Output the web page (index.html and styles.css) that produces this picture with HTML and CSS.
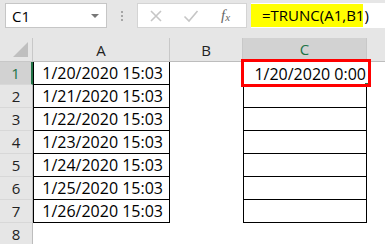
FILE: index.html
```html
<!DOCTYPE html>
<html lang="en">
<head>
    <meta charset="UTF-8">
    <title>TRUNC</title>
    <link rel="stylesheet" href="styles.css">
</head>
<body>
    <div class="toolbar">
        <div class="name-box">
            <span>C1</span>
            <span class="drop"></span>
        </div>
        <div class="grip"><i></i><i></i><i></i></div>
        <div class="fx-box">
            <svg class="icon" width="14" height="14" viewBox="0 0 14 14"><path d="M2 2 L12 12 M12 2 L2 12" stroke="#c6c6c6" stroke-width="1.6" fill="none"/></svg>
            <svg class="icon" width="16" height="14" viewBox="0 0 16 14"><path d="M1.5 7.5 L6 12 L14.5 2" stroke="#c6c6c6" stroke-width="1.6" fill="none"/></svg>
            <span class="fx">f<sub>x</sub></span>
        </div>
        <div class="formula">
            <span class="formula-text">=TRUNC(A1,B1)</span>
        </div>
    </div>

    <div class="sheet">
        <div class="corner"><span class="tri"></span></div>
        <div class="col-head">A</div>
        <div class="col-head">B</div>
        <div class="col-head active">C</div>
        <div class="col-head last"></div>

        <div class="row-head active">1</div>
        <div class="cell boxed">1/20/2020 15:03</div>
        <div class="cell"></div>
        <div class="cell selected">1/20/2020 0:00<span class="handle"></span></div>
        <div class="cell"></div>

        <div class="row-head">2</div>
        <div class="cell boxed">1/21/2020 15:03</div>
        <div class="cell"></div>
        <div class="cell boxed"></div>
        <div class="cell"></div>

        <div class="row-head">3</div>
        <div class="cell boxed">1/22/2020 15:03</div>
        <div class="cell"></div>
        <div class="cell boxed"></div>
        <div class="cell"></div>

        <div class="row-head">4</div>
        <div class="cell boxed">1/23/2020 15:03</div>
        <div class="cell"></div>
        <div class="cell boxed"></div>
        <div class="cell"></div>

        <div class="row-head">5</div>
        <div class="cell boxed">1/24/2020 15:03</div>
        <div class="cell"></div>
        <div class="cell boxed"></div>
        <div class="cell"></div>

        <div class="row-head">6</div>
        <div class="cell boxed">1/25/2020 15:03</div>
        <div class="cell"></div>
        <div class="cell boxed"></div>
        <div class="cell"></div>

        <div class="row-head">7</div>
        <div class="cell boxed">1/26/2020 15:03</div>
        <div class="cell"></div>
        <div class="cell boxed"></div>
        <div class="cell"></div>

        <div class="row-head">8</div>
        <div class="cell"></div>
        <div class="cell"></div>
        <div class="cell"></div>
        <div class="cell"></div>

        <div class="highlight"></div>
    </div>
</body>
</html>
```

FILE: styles.css
```css
body {
    margin: 0;
    background-color: #fff;
    font-family: "Open Sans", "Liberation Sans", sans-serif;
    color: #000;
    width: 385px;
    height: 244px;
    overflow: hidden;
}

/* --- barra de fórmulas --- */
.toolbar {
    height: 38px;
    background-color: #e6e6e6;
    display: flex;
    align-items: flex-start;
    padding-top: 3px;
    box-sizing: border-box;
}

.name-box {
    margin-left: 5px;
    width: 102px;
    height: 25px;
    box-sizing: border-box;
    background-color: #fff;
    border: 1px solid #c6c6c6;
    display: flex;
    align-items: center;
    justify-content: space-between;
    padding: 0 7px 0 6px;
    font-size: 15px;
}

.drop {
    width: 0;
    height: 0;
    border-left: 4px solid transparent;
    border-right: 4px solid transparent;
    border-top: 4px solid #777;
}

.grip {
    width: 30px;
    height: 25px;
    display: flex;
    flex-direction: column;
    align-items: center;
    justify-content: center;
    gap: 2px;
}

.grip i {
    width: 2px;
    height: 2px;
    background-color: #a6a6a6;
}

.fx-box {
    width: 110px;
    height: 25px;
    box-sizing: border-box;
    background-color: #fff;
    border: 1px solid #d4d4d4;
    display: flex;
    align-items: center;
    padding-left: 11px;
    gap: 20px;
}

.fx {
    font-family: "Liberation Serif", serif;
    font-style: italic;
    font-size: 15px;
    color: #666;
    margin-left: 2px;
}

.fx sub {
    font-size: 11px;
    vertical-align: -1px;
}

.formula {
    margin-left: 4px;
    flex: 1;
    height: 25px;
    background-color: #fff;
    padding-top: 1px;
    box-sizing: border-box;
}

.formula-text {
    display: inline-block;
    background-color: #ffff00;
    width: 112px;
    height: 23px;
    line-height: 23px;
    box-sizing: border-box;
    padding-left: 11px;
    font-size: 15px;
}

/* --- planilha --- */
.sheet {
    position: relative;
    display: grid;
    grid-template-columns: 33px 137px 73px 124px 1fr;
    grid-template-rows: 24px repeat(8, 23px);
}

.corner {
    background-color: #e6e6e6;
    border-right: 1px solid #c8c8c8;
    border-bottom: 1px solid #c8c8c8;
    position: relative;
}

.tri {
    position: absolute;
    right: 4px;
    bottom: 4px;
    width: 0;
    height: 0;
    border-left: 15px solid transparent;
    border-bottom: 15px solid #bfbfbf;
}

.col-head {
    background-color: #e6e6e6;
    border-right: 1px solid #c8c8c8;
    border-bottom: 1px solid #bdbdbd;
    display: flex;
    align-items: center;
    justify-content: center;
    font-size: 15px;
    color: #222;
}

.col-head.active {
    background-color: #d2d2d2;
    color: #217346;
    border-bottom: 2px solid #217346;
}

.col-head.last {
    border-right: none;
}

.row-head {
    background-color: #e6e6e6;
    border-right: 1px solid #bdbdbd;
    border-bottom: 1px solid #d8d8d8;
    display: flex;
    align-items: center;
    justify-content: center;
    font-size: 15px;
    color: #222;
}

.row-head.active {
    background-color: #d2d2d2;
    color: #217346;
    border-right: 2px solid #217346;
}

.cell {
    display: flex;
    align-items: center;
    justify-content: flex-end;
    font-size: 16px;
    padding-right: 6px;
    box-sizing: border-box;
    white-space: nowrap;
}

.cell.boxed {
    border-left: 1px solid #000;
    border-right: 1px solid #000;
    border-bottom: 1px solid #000;
}

.cell.selected {
    position: relative;
    padding-right: 1px;
}

.handle {
    position: absolute;
    right: -1px;
    bottom: -1px;
    width: 3px;
    height: 3px;
    background-color: #217346;
}

/* caixa vermelha em volta de C1 */
.highlight {
    position: absolute;
    left: 241px;
    top: 21px;
    width: 130px;
    height: 28px;
    box-sizing: border-box;
    border: 3px solid #ff0000;
}
```
